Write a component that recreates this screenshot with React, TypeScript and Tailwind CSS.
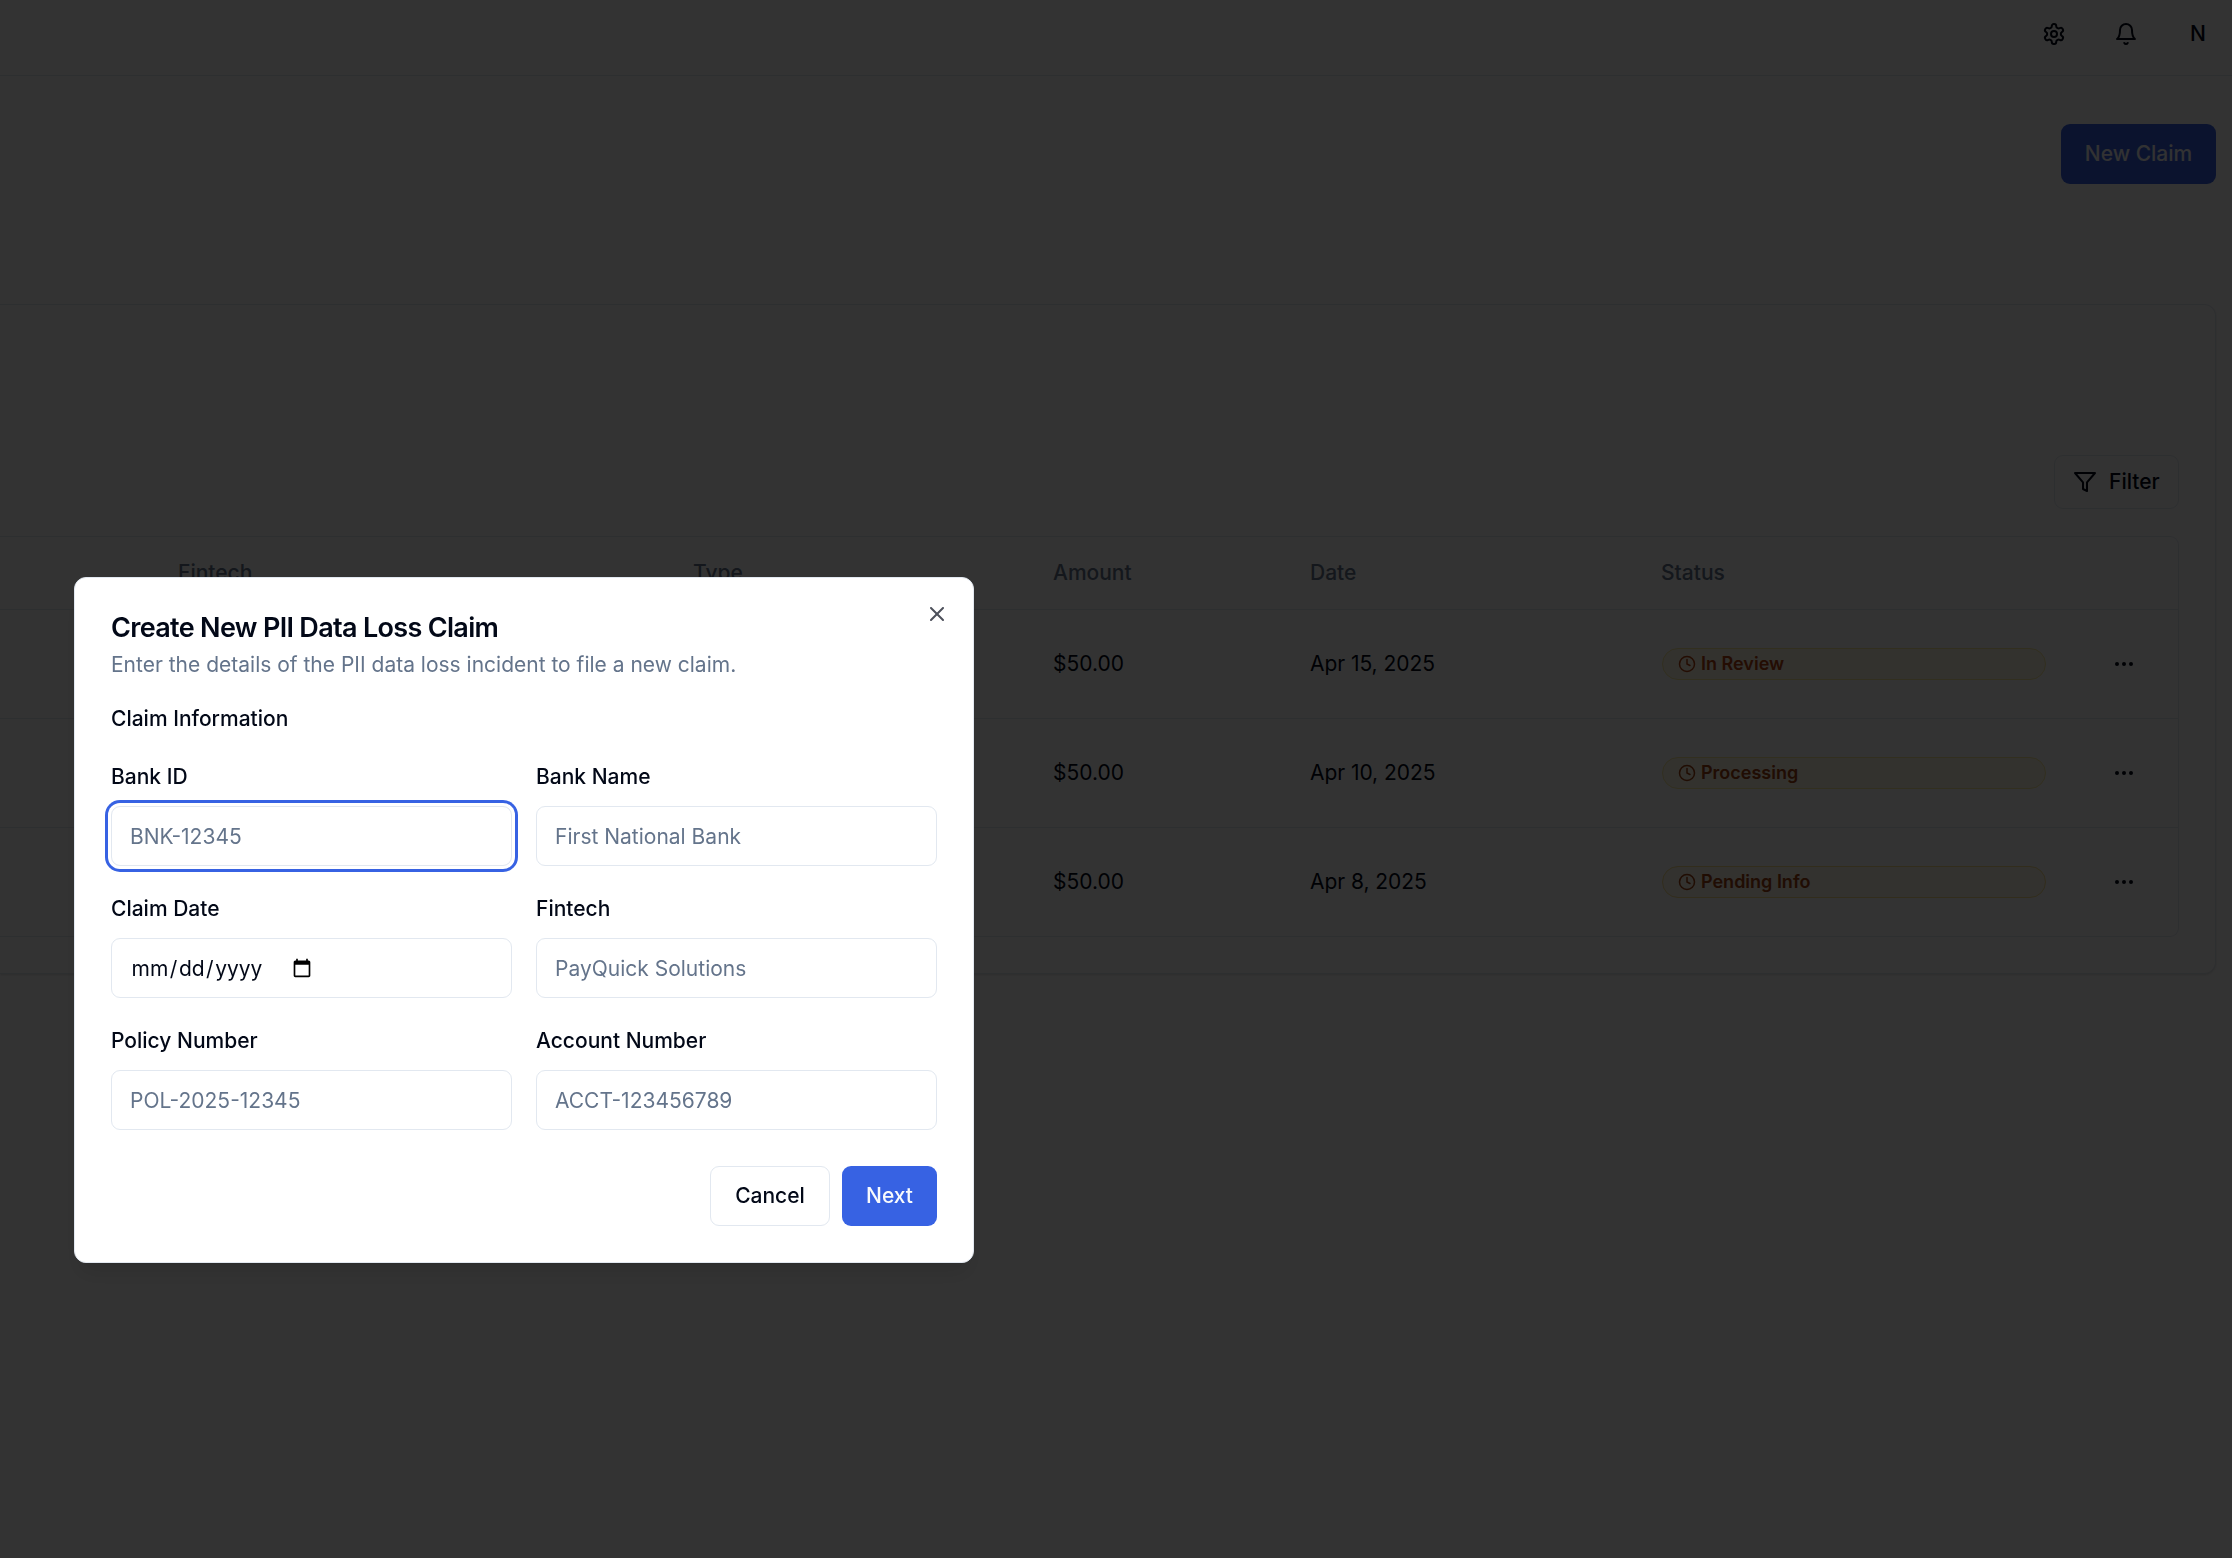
import type { ReactNode } from "react";

function Icon({ className, children }: { className: string; children: ReactNode }) {
  return (
    <svg
      viewBox="0 0 24 24"
      fill="none"
      stroke="currentColor"
      strokeWidth="2"
      strokeLinecap="round"
      strokeLinejoin="round"
      className={className}
    >
      {children}
    </svg>
  );
}

const claims = [
  { amount: "$50.00", date: "Apr 15, 2025", status: "In Review", tone: "bg-[#fdf8e6] border-[#f8ea9c] text-[#b4430f]" },
  { amount: "$50.00", date: "Apr 10, 2025", status: "Processing", tone: "bg-[#fdf8e6] border-[#f8ea9c] text-[#a1400f]" },
  { amount: "$50.00", date: "Apr 8, 2025", status: "Pending Info", tone: "bg-[#fdf7e8] border-[#f8e08c] text-[#a1400f]" },
];

const columns = "grid grid-cols-[154px_515px_360px_257px_352px_432px_108px] items-center";

function Header() {
  return (
    <header className="flex h-[76px] items-start justify-end border-b border-[#e2e8f0] pr-1">
      <div className="flex items-center gap-3 pt-1">
        <button className="flex size-[60px] items-center justify-center">
          <Icon className="size-6">
            <path d="M12.22 2h-.44a2 2 0 0 0-2 2v.18a2 2 0 0 1-1 1.73l-.43.25a2 2 0 0 1-2 0l-.15-.08a2 2 0 0 0-2.73.73l-.22.38a2 2 0 0 0 .73 2.73l.15.1a2 2 0 0 1 1 1.72v.51a2 2 0 0 1-1 1.74l-.15.09a2 2 0 0 0-.73 2.73l.22.38a2 2 0 0 0 2.73.73l.15-.08a2 2 0 0 1 2 0l.43.25a2 2 0 0 1 1 1.73V20a2 2 0 0 0 2 2h.44a2 2 0 0 0 2-2v-.18a2 2 0 0 1 1-1.73l.43-.25a2 2 0 0 1 2 0l.15.08a2 2 0 0 0 2.73-.73l.22-.39a2 2 0 0 0-.73-2.73l-.15-.08a2 2 0 0 1-1-1.74v-.5a2 2 0 0 1 1-1.74l.15-.09a2 2 0 0 0 .73-2.73l-.22-.38a2 2 0 0 0-2.73-.73l-.15.08a2 2 0 0 1-2 0l-.43-.25a2 2 0 0 1-1-1.73V4a2 2 0 0 0-2-2z" />
            <circle cx="12" cy="12" r="3" />
          </Icon>
        </button>
        <button className="flex size-[60px] items-center justify-center">
          <Icon className="size-6">
            <path d="M6 8a6 6 0 0 1 12 0c0 7 3 9 3 9H3s3-2 3-9" />
            <path d="M10.3 21a1.94 1.94 0 0 0 3.4 0" />
          </Icon>
        </button>
        <button className="flex size-[60px] items-center justify-center font-medium">N</button>
      </div>
    </header>
  );
}

function ClaimsTable() {
  return (
    <div className="rounded-r-[9px] border-y border-r border-[#e2e8f0]">
      <div className={`${columns} h-[73px] border-b border-[#e2e8f0] font-medium text-[#64748b]`}>
        <span />
        <span className="pl-6">Fintech</span>
        <span className="pl-6">Type</span>
        <span className="pl-6">Amount</span>
        <span className="pl-6">Date</span>
        <span className="pl-[23px]">Status</span>
        <span />
      </div>
      {claims.map((claim) => (
        <div key={claim.date} className={`${columns} h-[109px] border-b border-[#e2e8f0] last:h-[108px] last:border-b-0`}>
          <span />
          <span />
          <span />
          <span className="pl-6">{claim.amount}</span>
          <span className="pl-6 tracking-[-0.05px]">{claim.date}</span>
          <div className="px-6">
            <div className={`flex h-8 items-center rounded-full border px-[15px] text-[18px] leading-6 font-semibold ${claim.tone}`}>
              <Icon className="mr-[5px] size-[18px]">
                <circle cx="12" cy="12" r="10" />
                <polyline points="12 6 12 12 16 14" />
              </Icon>
              {claim.status}
            </div>
          </div>
          <div className="flex justify-center">
            <Icon className="size-6">
              <circle cx="12" cy="12" r="1" />
              <circle cx="19" cy="12" r="1" />
              <circle cx="5" cy="12" r="1" />
            </Icon>
          </div>
        </div>
      ))}
    </div>
  );
}

function Field({ label, placeholder, focused }: { label: string; placeholder?: string; focused?: boolean }) {
  return (
    <div>
      <div className="mb-3 h-9 text-2xl leading-9">
        <label className="text-[21px] leading-none font-medium">{label}</label>
      </div>
      {placeholder ? (
        <input
          placeholder={placeholder}
          className={`block h-[60px] w-full rounded-[9px] border border-[#e2e8f0] bg-white px-[18px] text-[21px] outline-none placeholder:text-[#64748b] ${
            focused ? "ring-[3px] ring-[#3762e3] ring-offset-[3px] ring-offset-white" : ""
          }`}
        />
      ) : (
        <div className="flex h-[60px] w-full items-center rounded-[9px] border border-[#e2e8f0] bg-white px-[18px] text-[21px]">
          <div className="flex pt-0.5">
            <span className="px-[1.5px]">mm</span>
            <span>/</span>
            <span className="px-[1.5px]">dd</span>
            <span>/</span>
            <span className="px-[1.5px]">yyyy</span>
          </div>
          <svg viewBox="0 0 24 24" fill="currentColor" className="ml-[28px] size-5 text-black">
            <path d="M20 3h-1V1h-2v2H7V1H5v2H4c-1.1 0-2 .9-2 2v16c0 1.1.9 2 2 2h16c1.1 0 2-.9 2-2V5c0-1.1-.9-2-2-2zm0 18H4V8h16v13z" />
          </svg>
        </div>
      )}
    </div>
  );
}

function ClaimDialog() {
  return (
    <div className="fixed top-[577px] left-[74px] h-[686px] w-[900px] rounded-xl border border-[#e2e8f0] bg-white p-9 shadow-[0_15px_22px_-4px_rgba(0,0,0,0.1),0_6px_9px_-6px_rgba(0,0,0,0.1)]">
      <h2 className="text-[27px] leading-none font-semibold tracking-tight">Create New PII Data Loss Claim</h2>
      <p className="mt-[9px] leading-[30px] text-[#64748b]">
        Enter the details of the PII data loss incident to file a new claim.
      </p>
      <h3 className="mt-6 leading-[30px] font-medium">Claim Information</h3>
      <div className="mt-6 grid grid-cols-2 gap-6">
        <Field label="Bank ID" placeholder="BNK-12345" focused />
        <Field label="Bank Name" placeholder="First National Bank" />
        <Field label="Claim Date" />
        <Field label="Fintech" placeholder="PayQuick Solutions" />
        <Field label="Policy Number" placeholder="POL-2025-12345" />
        <Field label="Account Number" placeholder="ACCT-123456789" />
      </div>
      <div className="mt-9 flex justify-end gap-3">
        <button className="h-[60px] w-[120px] rounded-[9px] border border-[#e2e8f0] bg-white font-medium">Cancel</button>
        <button className="h-[60px] w-[95px] rounded-[9px] bg-[#3762e3] font-medium text-[#f8fafc]">Next</button>
      </div>
      <button className="absolute top-6 right-6 opacity-70">
        <Icon className="size-6">
          <path d="M18 6 6 18" />
          <path d="m6 6 12 12" />
        </Icon>
      </button>
    </div>
  );
}

export default function App() {
  return (
    <div className="h-[1558px] w-[2232px] overflow-hidden bg-white font-['Inter',sans-serif] text-[21px] leading-[30px] text-[#020817]">
      <Header />
      <main className="pt-12 pr-4">
        <div className="flex justify-end">
          <button className="h-[60px] w-[155px] rounded-[9px] bg-[#3762e3] font-medium text-[#f8fafc]">New Claim</button>
        </div>
        <section className="mt-[120px] rounded-r-xl border-y border-r border-[#e2e8f0] bg-white pt-[150px] pr-9 pb-9 shadow-sm">
          <div className="mb-[27px] flex justify-end">
            <button className="flex h-[54px] w-[125px] items-center gap-3 rounded-[9px] border border-[#e2e8f0] pl-[18px] font-medium">
              <Icon className="size-6">
                <polygon points="22 3 2 3 10 12.46 10 19 14 21 14 12.46 22 3" />
              </Icon>
              Filter
            </button>
          </div>
          <ClaimsTable />
        </section>
      </main>
      <div className="fixed inset-0 bg-black/80" />
      <ClaimDialog />
    </div>
  );
}
